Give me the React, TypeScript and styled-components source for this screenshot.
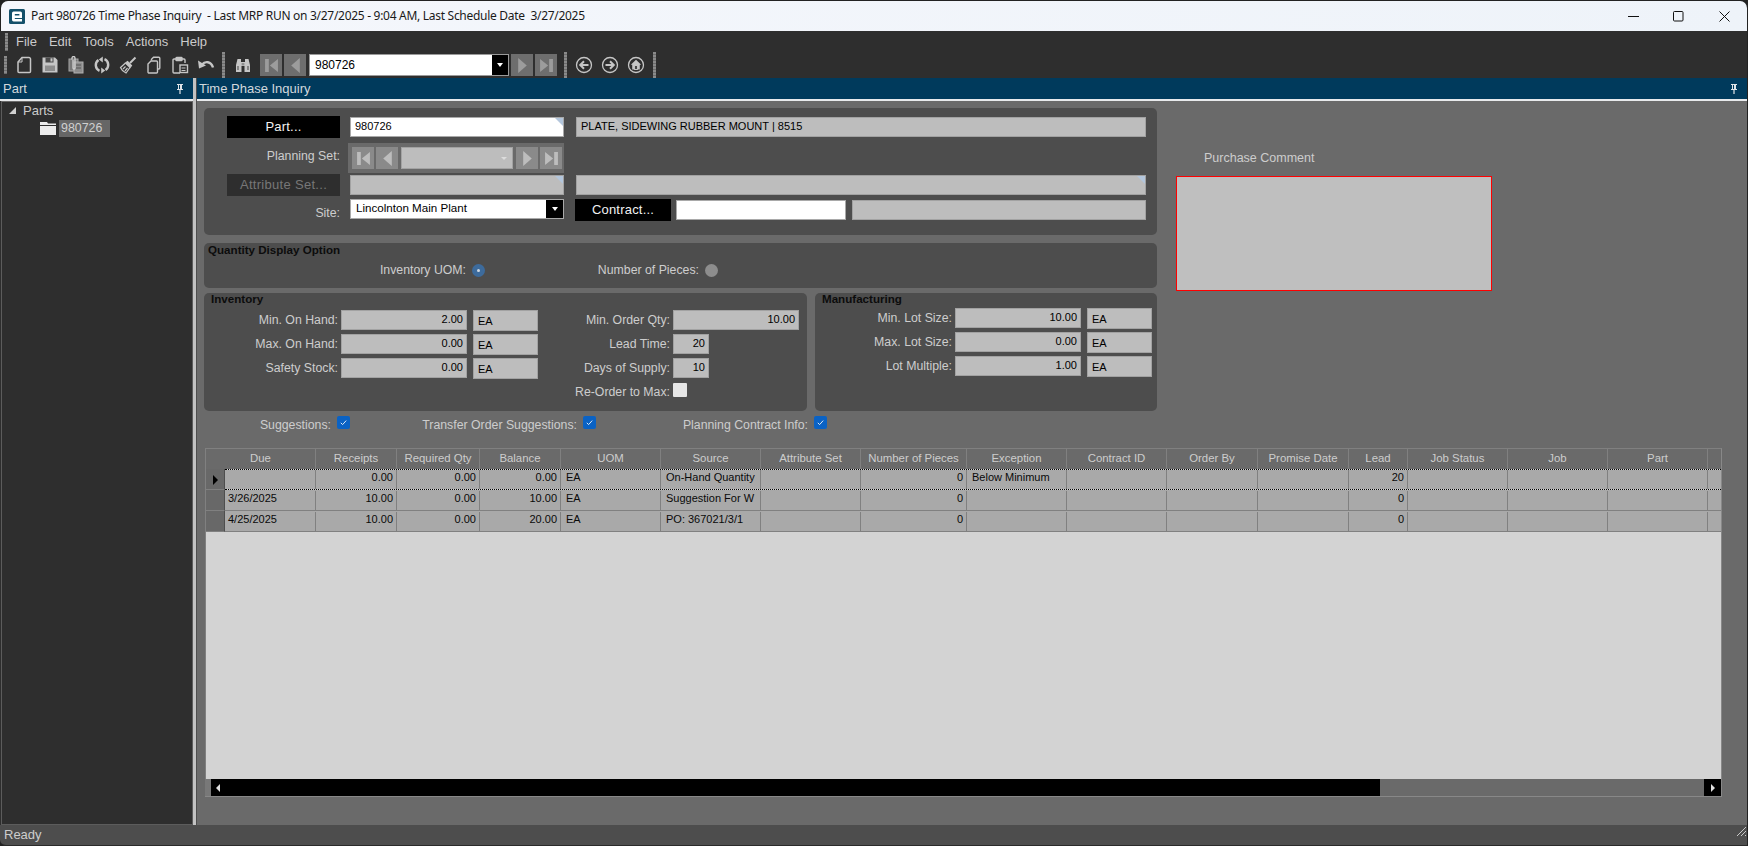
import React from "react";
import styled, { createGlobalStyle } from "styled-components";

const Global = createGlobalStyle`
  html, body { margin: 0; padding: 0; height: 100%; overflow: hidden; background: #222; }
  #root { width: 1748px; height: 846px; }
  * { box-sizing: border-box; }
`;

const Window = styled.div`
  width: 1748px; height: 846px; display: flex; flex-direction: column;
  font-family: "Liberation Sans", Arial, sans-serif; color: #cdcdcd; background: #222;
`;
const TitleBar = styled.header`
  height: 30px; margin: 1px 1px 0 1px; flex: none; display: flex; align-items: center;
  background: linear-gradient(90deg, #f5f7fc, #eef3f9); border-radius: 7px 7px 0 0; padding-left: 8px;
`;
const TitleText = styled.span`
  margin-left: 6px; font: 12px/16px "Noto Sans", "Open Sans", sans-serif; color: #1a1a1a; white-space: pre; flex: 1; letter-spacing: -0.29px;
`;
const WinButton = styled.span`
  width: 45.5px; height: 30px; display: flex; align-items: center; justify-content: center; color: #111;
`;
const MenuBar = styled.nav`
  height: 21px; flex: none; background: #2e2e2e; display: flex; align-items: center; padding-left: 5px; margin-right: 1px;
`;
const Grip = styled.i<{ $mr?: number }>`
  width: 3px; height: 18px; background: repeating-linear-gradient(180deg, #8a8a8a 0 2px, #6c6c6c 2px 3px); flex: none;
  margin-right: ${p => p.$mr ?? 0}px;
`;
const MenuItems = styled.div`
  display: flex; gap: 12px; margin-left: 8px; font-size: 13px; color: #cbcbcb;
`;
const ToolBar = styled.div`
  height: 26px; flex: none; background: #2e2e2e; display: flex; align-items: center; padding-left: 4px; margin-right: 1px;
`;
const Sep = styled.i<{ $ml?: number; $mr?: number }>`
  width: 3px; height: 26px; flex: none; background: repeating-linear-gradient(180deg, #8a8a8a 0 2px, #6c6c6c 2px 3px);
  margin-left: ${p => p.$ml ?? 0}px; margin-right: ${p => p.$mr ?? 0}px;
`;
const IconSlot = styled.span<{ $ml?: number }>`
  width: 26px; height: 26px; flex: none; display: flex; align-items: center; justify-content: center; color: #c6c6c6;
  margin-left: ${p => p.$ml ?? 0}px;
`;
const NavBtn = styled.span<{ $bg: string; $w: number; $h: number }>`
  width: ${p => p.$w}px; height: ${p => p.$h}px; background: ${p => p.$bg}; flex: none; display: flex; align-items: center; justify-content: center;
`;
const NavRow = styled.div<{ $gap: number; $ml?: number }>`
  display: flex; align-items: center; gap: ${p => p.$gap}px; margin-left: ${p => p.$ml ?? 0}px;
`;
const Combo = styled.div`
  width: 200px; height: 22px; flex: none; margin: 0 2px 0 3px; background: #fff; border: 1px solid #9a9a9a; display: flex; align-items: stretch;
  font-size: 12px; line-height: 20px; color: #000;
`;
const ComboText = styled.span`
  flex: 1; padding-left: 5px;
`;
const DropBlack = styled.span<{ $w: number }>`
  width: ${p => p.$w}px; background: #000; display: flex; align-items: center; justify-content: center; flex: none;
`;
const DownTri = styled.i`
  width: 0; height: 0; border-left: 3.5px solid transparent; border-right: 3.5px solid transparent; border-top: 4px solid #fff;
`;
const Main = styled.div`
  height: 747px; flex: none; display: flex; margin-right: 1px; background: #6a6a6a;
`;
const LeftPane = styled.aside`
  width: 193px; flex: none; display: flex; flex-direction: column; background: #2e2e2e;
`;
const PaneHead = styled.div<{ $pl: number }>`
  height: 23px; flex: none; background: #003a5c; border-bottom: 2px solid #e8eaec; display: flex; align-items: center;
  justify-content: space-between; font-size: 13px; line-height: 21px; color: #d2d8dc; padding: 0 9px 0 ${p => p.$pl}px;
`;
const Pin = styled.svg`
  width: 8px; height: 10px; flex: none;
`;
const TreeBox = styled.div`
  flex: 1; margin-left: 1px; border: 1px solid #5c5c5c; border-top-color: #6a6a6a; background: #2e2e2e; font-size: 13px; color: #cbcbcb;
`;
const TreeRoot = styled.div`
  height: 17px; display: flex; align-items: center; padding-left: 7px; gap: 7px; line-height: 17px;
`;
const TreeChild = styled.div`
  height: 17px; margin-top: 1px; display: flex; align-items: center; padding-left: 38px; gap: 3px;
`;
const TreeSel = styled.span`
  background: #666; height: 17px; width: 51px; padding-left: 2px; font-size: 12.4px; line-height: 17px; color: #d0d0d0;
`;
const Splitter = styled.div`
  width: 4px; flex: none; background: #c2c2c2; border-right: 1px solid #4d4d4d;
`;
const RightPane = styled.section`
  flex: 1; display: flex; flex-direction: column; min-width: 0;
`;
const TopSplit = styled.div`
  height: 347px; flex: none; display: flex; padding: 7px 0 0 7px;
`;
const Forms = styled.div`
  width: 953px; flex: none; display: flex; flex-direction: column;
`;
const Card = styled.div<{ $h: number; $mt?: number; $w?: number }>`
  background: #4d4d4d; border-radius: 5px; height: ${p => p.$h}px; margin-top: ${p => p.$mt ?? 0}px;
  ${p => (p.$w ? `width: ${p.$w}px; flex: none;` : "")}
`;
const HeadCard = styled(Card)`
  padding: 8px 0 0 23px;
`;
const HeadRow = styled.div<{ $h: number; $mt?: number }>`
  display: grid; grid-template-columns: 123px 226px 570px; height: ${p => p.$h}px; margin-top: ${p => p.$mt ?? 0}px; align-items: center;
`;
const BlackBtn = styled.div<{ $w: number; $off?: boolean }>`
  width: ${p => p.$w}px; height: 22px; flex: none; background: ${p => (p.$off ? "#2e2e2e" : "#000")}; color: ${p => (p.$off ? "#777" : "#f2f2f2")};
  font-size: 13px; line-height: 22px; text-align: center; letter-spacing: ${p => (p.$off ? "0.3px" : "0.2px")};
`;
const RightLabel = styled.div<{ $w?: number; $pr?: number; $mt?: number }>`
  ${p => (p.$w ? `width: ${p.$w}px;` : "")} text-align: right; font-size: 12.3px; line-height: 15px; color: #cdcdcd; white-space: nowrap;
  padding-right: ${p => p.$pr ?? 0}px; margin-top: ${p => p.$mt ?? 0}px;
`;
const Field = styled.div<{ $w?: number; $h?: number; $white?: boolean; $right?: boolean; $ml?: number }>`
  position: relative; width: ${p => (p.$w ? `${p.$w}px` : "100%")}; height: ${p => p.$h ?? 20}px; flex: none;
  background: ${p => (p.$white ? "#fff" : "#bdbdbd")}; border: 1px solid ${p => (p.$white ? "#a9a9a9" : "#a2a2a2")};
  font-size: 11px; line-height: 17px; color: #000; padding: 0 3px 0 4px; text-align: ${p => (p.$right ? "right" : "left")}; white-space: nowrap; overflow: hidden;
  margin-left: ${p => p.$ml ?? 0}px;
`;
const UomField = styled(Field)`
  line-height: 20px; padding-left: 4px;
`;
const Corner = styled.i`
  position: absolute; top: 0; right: 0; width: 0; height: 0; border-top: 8px solid #b3c6dc; border-left: 8px solid transparent;
`;
const PlanSet = styled.div`
  width: 216px; height: 30px; margin-left: -2px; background: #6a6a6a; display: flex; align-items: center; padding-left: 4px; gap: 2px;
`;
const PlanCombo = styled.div`
  width: 112px; height: 22px; margin: 0 1px; background: #bdbdbd; border: 1px solid #a2a2a2; flex: none; display: flex; align-items: center; justify-content: flex-end; padding-right: 5px;
`;
const GreyTri = styled.i`
  width: 0; height: 0; border-left: 3px solid transparent; border-right: 3px solid transparent; border-top: 3px solid #dcdcdc;
`;
const SiteSelect = styled.div`
  width: 214px; height: 20px; align-self: start; background: #fff; border: 1px solid #a9a9a9; display: flex; align-items: stretch; font-size: 11.6px; line-height: 16px; color: #000;
`;
const SiteText = styled.span`
  flex: 1; padding-left: 5px;
`;
const ContractCell = styled.div`
  display: flex; align-items: center; margin-left: -1px;
`;
const CardTitle = styled.div<{ $pl: number; $mb?: number; $pt?: number }>`
  font-size: 11.6px; font-weight: 700; line-height: 12px; color: #0c0c0c; padding-left: ${p => p.$pl}px; margin-bottom: ${p => p.$mb ?? 0}px; padding-top: ${p => p.$pt ?? 0}px;
`;
const QtyRow = styled.div`
  display: flex; align-items: center; height: 18px; margin-top: 5px;
`;
const Radio = styled.span<{ $on?: boolean; $ml: number }>`
  width: 13px; height: 13px; border-radius: 50%; flex: none; margin-left: ${p => p.$ml}px; background: ${p => (p.$on ? "#3d6b9c" : "#8d8d8d")};
  display: flex; align-items: center; justify-content: center;
  &::after { content: ""; width: 3px; height: 3px; border-radius: 50%; background: ${p => (p.$on ? "#cfd8e2" : "transparent")}; }
`;
const TwoCards = styled.div`
  display: flex; gap: 8px; margin-top: 5px;
`;
const FieldGrid = styled.div<{ $cols: string }>`
  display: grid; grid-template-columns: ${p => p.$cols}; grid-auto-rows: 24px; align-items: start;
`;
const CheckRow = styled.div`
  height: 37px; display: flex; padding-top: 5px;
`;
const CheckGroup = styled.div<{ $w: number }>`
  width: ${p => p.$w}px; flex: none; display: flex; justify-content: flex-end; gap: 6px;
`;
const CheckBox = styled.span<{ $on?: boolean }>`
  width: 13px; height: 13px; border-radius: 2px; flex: none; background: ${p => (p.$on ? "#0a62c4" : "#e6e6e6")}; display: flex; align-items: center; justify-content: center;
`;
const PlainCheck = styled(CheckBox)`
  width: 14px; height: 14px; margin-top: 1px; border-radius: 1px;
`;
const ReorderLabel = styled(RightLabel)`
  grid-column: 4;
`;
const Comment = styled.div`
  width: 317px; flex: none; margin-left: 19px; display: flex; flex-direction: column; padding-top: 42px;
`;
const CommentLabel = styled.div`
  font-size: 12.5px; line-height: 16px; color: #cdcdcd; padding-left: 28px; margin-bottom: 10px; padding-top: 1px; margin-top: -1px;
`;
const CommentBox = styled.div`
  width: 316px; height: 115px; background: #bfbfbf; border: 1px solid #ff0000;
`;
const GridWrap = styled.div`
  width: 1517px; height: 349px; margin-left: 8px; display: flex; flex-direction: column; background: #d3d3d3; border-right: 1px solid #888; border-top: 1px solid #808080; border-bottom: 1px solid #888;
`;
const GridHead = styled.div`
  display: flex; height: 20px; flex: none; background: #6a6a6a; border-left: 1px solid #808080;
`;
const HeadCell = styled.div<{ $w: number }>`
  width: ${p => p.$w}px; flex: none; border-right: 1px solid #808080; font-size: 11.4px; line-height: 19px; text-align: center; color: #cdcdcd; white-space: nowrap; overflow: hidden;
  &:last-child { border-right: 0; }
`;
const GridRow = styled.div`
  display: flex; height: 21px; flex: none;
`;
const Indicator = styled.div`
  width: 20px; flex: none; background: #686868; border-left: 1px solid #808080; border-bottom: 1px solid #808080; border-right: 1px solid #4e4e4e; display: flex; align-items: center; justify-content: center; padding-top: 1px;
`;
const RowCells = styled.div<{ $sel?: boolean }>`
  display: flex; flex: 1; min-width: 0; border-top: 1px ${p => (p.$sel ? "dotted #000" : "solid #a9a9a9")}; border-bottom: 1px ${p => (p.$sel ? "dotted #000" : "solid #808080")};
`;
const Cell = styled.div<{ $w: number; $right?: boolean; $pl: number }>`
  width: ${p => p.$w}px; flex: none; background: #a9a9a9; border-right: 1px solid #808080; font-size: 11px; line-height: 15px; color: #0a0a0a;
  text-align: ${p => (p.$right ? "right" : "left")}; padding: ${p => (p.$right ? "0 3px 0 0" : `0 1px 0 ${p.$pl}px`)}; white-space: nowrap; overflow: hidden;
  &:last-child { border-right: 0; }
`;
const GridSpace = styled.div`
  flex: 1; border-left: 1px solid #808080;
`;
const HScroll = styled.div`
  height: 17px; flex: none; display: flex; background: #6a6a6a;
`;
const ScrollLead = styled.span`
  width: 6px; background: #787878; flex: none;
`;
const ScrollThumb = styled.span`
  width: 1169px; background: #000; flex: none; display: flex; align-items: center; padding-left: 5px;
`;
const ScrollTrack = styled.span`
  flex: 1;
`;
const ScrollBtn = styled.span`
  width: 17px; background: #000; flex: none; display: flex; align-items: center; justify-content: center;
`;
const Arrow = styled.i<{ $dir: "l" | "r"; $c?: string; $s?: number }>`
  width: 0; height: 0; border-top: ${p => p.$s ?? 4}px solid transparent; border-bottom: ${p => p.$s ?? 4}px solid transparent;
  ${p => (p.$dir === "l" ? `border-right: ${p.$s ?? 4}px solid ${p.$c ?? "#e0e0e0"};` : `border-left: ${p.$s ?? 4}px solid ${p.$c ?? "#e0e0e0"};`)}
`;
const StatusBar = styled.footer`
  height: 21px; flex: none; background: #4d4d4d; border-bottom: 1px solid #2a2a2a; font-size: 13px; line-height: 20px; color: #cdcdcd; padding-left: 4px; display: flex; justify-content: space-between; margin-right: 1px; border-radius: 0 0 0 6px;
`;
const FlexIcon = styled.svg`
  flex: none;
`;
const FlipIcon = styled.svg`
  transform: scaleX(-1);
`;

const Logo = () => (
  <FlexIcon width="16" height="15" viewBox="0 0 16 15">
    <rect width="16" height="15" rx="1.5" fill="#14506a" />
    <path fillRule="evenodd" fill="#fff" d="M4.6 2.6h6.8a1.6 1.6 0 0 1 1.6 1.6v4.7H5.8v1.2H13v2.3H4.6A1.6 1.6 0 0 1 3 10.8V4.2a1.6 1.6 0 0 1 1.6-1.6zM5.8 5v1.6h4.6V5z" />
  </FlexIcon>
);
const PinIcon = () => (
  <Pin viewBox="0 0 8 10"><path d="M1 0h6v1H6v4h1v1H4.6v4H3.4V6H1V5h1V1H1zM3 1v4h1V1z" fill="#dfe4e8" fillRule="evenodd" /></Pin>
);

const S = { width: 18, height: 18, viewBox: "0 0 18 18" };
const FileIcon = () => (
  <svg {...S} fill="none" stroke="currentColor" strokeWidth="1.5"><path d="M7 1.5h7a1.5 1.5 0 0 1 1.5 1.5v12.5a1 1 0 0 1-1 1H4a1 1 0 0 1-1-1V6z" /><path d="M7 1.5v4.5H3" strokeWidth="1" /></svg>
);
const SaveIcon = () => (
  <svg {...S}><path d="M1.5 1.5h12.5l2.5 2.5v12.5h-15z" fill="currentColor" /><rect x="4.5" y="1.5" width="8" height="5" fill="#4a4a4a" /><rect x="9.5" y="2.3" width="2" height="3.2" fill="#c6c6c6" /><rect x="4" y="9.5" width="10" height="5.5" fill="#8d8d8d" /></svg>
);
const DeleteIcon = () => (
  <svg {...S}><rect x="2" y="3" width="9" height="12" fill="#777" stroke="#a8a8a8" /><rect x="7" y="6" width="9" height="11" fill="#8d8d8d" stroke="#b0b0b0" /><path d="M5 3.5V2a1.5 1.5 0 0 1 3 0v10a1 1 0 0 1-2 0V4" fill="none" stroke="#d0d0d0" strokeWidth="1.3" /><path d="M9 9h5M9 12h5" stroke="#555" /></svg>
);
const RefreshIcon = () => (
  <svg {...S} fill="none" stroke="currentColor" strokeWidth="2.4"><path d="M6.5 14.8A6.2 6.2 0 0 1 5.5 4" /><path d="M11.5 3.2a6.2 6.2 0 0 1 1 10.8" /><path d="M9.8 0.6v6l-4-3zM8.2 17.4v-6l4 3z" fill="currentColor" stroke="none" /></svg>
);
const BroomIcon = () => (
  <svg {...S} fill="none" stroke="currentColor" strokeWidth="1.2"><path d="M11 7l5.5-5.5" strokeWidth="2" /><path d="M8.5 5.5l4 4-1.5 2L6.5 7z" fill="currentColor" /><path d="M6.5 7L1.5 11.5c1 2.5 3 4.5 5.5 5.5l4-5.5" /><path d="M4 13l2.5-2.5M6 15l2.5-3" /></svg>
);
const CopyIcon = () => (
  <svg {...S} fill="none" stroke="currentColor" strokeWidth="1.4"><path d="M6.5 4.5V3.2l2-2h5.3a1 1 0 0 1 1 1V12a1 1 0 0 1-1 1h-1.3" /><path d="M6 5h5.5a1 1 0 0 1 1 1v10a1 1 0 0 1-1 1H4a1 1 0 0 1-1-1V8z" fill="#2e2e2e" /></svg>
);
const PasteIcon = () => (
  <svg {...S} fill="none" stroke="currentColor" strokeWidth="1.4"><path d="M5 3H3a1 1 0 0 0-1 1v12a1 1 0 0 0 1 1h6" /><path d="M11 3h2a1 1 0 0 1 1 1v3" /><rect x="5" y="1.5" width="6" height="3" rx=".6" fill="currentColor" /><rect x="9" y="9" width="7.5" height="7.5" fill="#2e2e2e" /><path d="M10.5 12h4M10.5 14.5h4" strokeWidth="1" /></svg>
);
const UndoIcon = () => (
  <svg {...S} fill="none" stroke="currentColor" strokeWidth="2.4"><path d="M5 8.5c3-3.5 9-3.5 11 3" /><path d="M1 4.5l1 8 7-3z" fill="currentColor" stroke="none" /></svg>
);
const BinocularsIcon = () => (
  <svg {...S}><path d="M3.5 3h3.5v3h4V3h3.5l1.5 6v7h-5.5V10H7.5v6H2V9z" fill="currentColor" /><rect x="7.6" y="7" width="2.8" height="2.5" fill="#8f8f8f" /><path d="M4 10v4M14 10v4" stroke="#6a6a6a" strokeWidth="1.4" /></svg>
);
const backParts = (
  <>
    <circle cx="9" cy="9" r="7.5" strokeWidth="1.3" /><path d="M13.5 9H6M9 5.2L5.2 9 9 12.8" strokeWidth="2" />
  </>
);
const CircleBack = () => <svg {...S} fill="none" stroke="currentColor">{backParts}</svg>;
const CircleForward = () => <FlipIcon {...S} fill="none" stroke="currentColor">{backParts}</FlipIcon>;
const HomeIcon = () => (
  <svg {...S} fill="none" stroke="currentColor"><circle cx="9" cy="9" r="7.5" strokeWidth="1.3" /><path d="M9 3.8L3.8 8.8H5.2V13.5H12.8V8.8H14.2z" fill="currentColor" stroke="none" /><rect x="7.6" y="9.5" width="2.8" height="4" fill="#3a3a3a" /></svg>
);

type NavKind = "first" | "prev" | "next" | "last";
const NavGlyph = ({ kind, c, w = 14 }: { kind: NavKind; c: string; w?: number }) => {
  const d = {
    first: "M1 1h3.5v12H1zM13 1v12L5.5 7z",
    prev: "M11 0v14L3 7z",
    next: "M3 0v14l8-7z",
    last: "M1 1v12l7.5-6zM9.5 1H13v12H9.5z",
  }[kind];
  return <svg width={w} height={w} viewBox="0 0 14 14"><path d={d} fill={c} /></svg>;
};
const ToolNav = ({ kind }: { kind: NavKind }) => (
  <NavBtn $bg="#6e6e6e" $w={22} $h={22}><NavGlyph kind={kind} c="#9c9c9c" w={15} /></NavBtn>
);
const PlanNav = ({ kind }: { kind: NavKind }) => (
  <NavBtn $bg="#8a8a8a" $w={22} $h={22}><NavGlyph kind={kind} c="#bdbdbd" w={15} /></NavBtn>
);
const TinyCheck = () => (
  <svg width="9" height="9" viewBox="0 0 9 9"><path d="M1.8 4.8L3.6 6.6 7.2 2.6" fill="none" stroke="#dbe8f7" strokeWidth="1" /></svg>
);

const cols: [string, number][] = [
  ["Due", 111], ["Receipts", 81], ["Required Qty", 83], ["Balance", 81], ["UOM", 100], ["Source", 100],
  ["Attribute Set", 100], ["Number of Pieces", 106], ["Exception", 100], ["Contract ID", 100], ["Order By", 91],
  ["Promise Date", 91], ["Lead", 59], ["Job Status", 100], ["Job", 100], ["Part", 100], ["", 13],
];
const rightCols = new Set([1, 2, 3, 7, 12]);
const rows = [
  ["", "0.00", "0.00", "0.00", "EA", "On-Hand Quantity", "", "0", "Below Minimum", "", "", "", "20", "", "", "", ""],
  ["3/26/2025", "10.00", "0.00", "10.00", "EA", "Suggestion For W", "", "0", "", "", "", "", "0", "", "", "", ""],
  ["4/25/2025", "10.00", "0.00", "20.00", "EA", "PO: 367021/3/1", "", "0", "", "", "", "", "0", "", "", "", ""],
];

const inv = [
  ["Min. On Hand:", "2.00", "Min. Order Qty:", "10.00", 126],
  ["Max. On Hand:", "0.00", "Lead Time:", "20", 36],
  ["Safety Stock:", "0.00", "Days of Supply:", "10", 36],
] as const;
const mfg = [["Min. Lot Size:", "10.00"], ["Max. Lot Size:", "0.00"], ["Lot Multiple:", "1.00"]];

export default function App() {
  return (
    <Window>
      <Global />
      <TitleBar>
        <Logo />
        <TitleText>Part 980726 Time Phase Inquiry  - Last MRP RUN on 3/27/2025 - 9:04 AM, Last Schedule Date  3/27/2025</TitleText>
        <WinButton><svg width="11" height="11" viewBox="0 0 11 11"><path d="M0 5.5h11" stroke="currentColor" /></svg></WinButton>
        <WinButton><svg width="11" height="11" viewBox="0 0 11 11"><rect x=".5" y=".5" width="9.5" height="9.5" rx="1" fill="none" stroke="currentColor" /></svg></WinButton>
        <WinButton><svg width="11" height="11" viewBox="0 0 11 11"><path d="M.5.5l10 10M10.5.5l-10 10" stroke="currentColor" /></svg></WinButton>
      </TitleBar>
      <MenuBar>
        <Grip />
        <MenuItems><span>File</span><span>Edit</span><span>Tools</span><span>Actions</span><span>Help</span></MenuItems>
      </MenuBar>
      <ToolBar>
        <Grip $mr={4} />
        <IconSlot><FileIcon /></IconSlot>
        <IconSlot><SaveIcon /></IconSlot>
        <IconSlot><DeleteIcon /></IconSlot>
        <IconSlot><RefreshIcon /></IconSlot>
        <IconSlot><BroomIcon /></IconSlot>
        <IconSlot><CopyIcon /></IconSlot>
        <IconSlot><PasteIcon /></IconSlot>
        <IconSlot><UndoIcon /></IconSlot>
        <Sep $ml={3} />
        <IconSlot $ml={5}><BinocularsIcon /></IconSlot>
        <NavRow $gap={2} $ml={4}><ToolNav kind="first" /><ToolNav kind="prev" /></NavRow>
        <Combo><ComboText>980726</ComboText><DropBlack $w={16}><DownTri /></DropBlack></Combo>
        <NavRow $gap={2}><ToolNav kind="next" /><ToolNav kind="last" /></NavRow>
        <Sep $ml={7} />
        <IconSlot $ml={4}><CircleBack /></IconSlot>
        <IconSlot><CircleForward /></IconSlot>
        <IconSlot><HomeIcon /></IconSlot>
        <Sep $ml={4} />
      </ToolBar>
      <Main>
        <LeftPane>
          <PaneHead $pl={3}><span>Part</span><PinIcon /></PaneHead>
          <TreeBox>
            <TreeRoot>
              <FlexIcon width="7" height="7" viewBox="0 0 7 7"><path d="M7 0v7H0z" fill="#d0d0d0" /></FlexIcon>
              <span>Parts</span>
            </TreeRoot>
            <TreeChild>
              <FlexIcon width="16" height="13" viewBox="0 0 16 13"><path d="M0 0h7l1 1.5h8V3H0zM0 4h16v9H0z" fill="#ececec" /></FlexIcon>
              <TreeSel>980726</TreeSel>
            </TreeChild>
          </TreeBox>
        </LeftPane>
        <Splitter />
        <RightPane>
          <PaneHead $pl={2}><span>Time Phase Inquiry</span><PinIcon /></PaneHead>
          <TopSplit>
            <Forms>
              <HeadCard $h={127}>
                <HeadRow $h={22}>
                  <BlackBtn $w={113}>Part...</BlackBtn>
                  <Field $w={214} $white><span>980726</span><Corner /></Field>
                  <Field>PLATE, SIDEWING RUBBER MOUNT | 8515</Field>
                </HeadRow>
                <HeadRow $h={30} $mt={5}>
                  <RightLabel $w={113} $mt={-4}>Planning Set:</RightLabel>
                  <PlanSet>
                    <PlanNav kind="first" /><PlanNav kind="prev" />
                    <PlanCombo><GreyTri /></PlanCombo>
                    <PlanNav kind="next" /><PlanNav kind="last" />
                  </PlanSet>
                  <span />
                </HeadRow>
                <HeadRow $h={22} $mt={1}>
                  <BlackBtn $w={113} $off>Attribute Set...</BlackBtn>
                  <Field $w={214}><Corner /></Field>
                  <Field><Corner /></Field>
                </HeadRow>
                <HeadRow $h={22} $mt={3}>
                  <RightLabel $w={113} $mt={6}>Site:</RightLabel>
                  <SiteSelect><SiteText>Lincolnton Main Plant</SiteText><DropBlack $w={17}><DownTri /></DropBlack></SiteSelect>
                  <ContractCell>
                    <BlackBtn $w={96}>Contract...</BlackBtn>
                    <Field $w={170} $white $ml={5} />
                    <Field $w={294} $ml={6} />
                  </ContractCell>
                </HeadRow>
              </HeadCard>
              <Card $h={45} $mt={8}>
                <CardTitle $pl={4} $pt={1}>Quantity Display Option</CardTitle>
                <QtyRow>
                  <RightLabel $w={262}>Inventory UOM:</RightLabel>
                  <Radio $on $ml={6} />
                  <RightLabel $w={214}>Number of Pieces:</RightLabel>
                  <Radio $ml={6} />
                </QtyRow>
              </Card>
              <TwoCards>
                <Card $h={118} $w={603}>
                  <CardTitle $pl={7} $mb={5}>Inventory</CardTitle>
                  <FieldGrid $cols="137px 132px 65px 135px 126px">
                    {inv.map(r => (
                      <React.Fragment key={r[0]}>
                        <RightLabel $pr={3} $mt={3}>{r[0]}</RightLabel>
                        <Field $w={126} $right>{r[1]}</Field>
                        <UomField $w={65} $h={21}>EA</UomField>
                        <RightLabel $pr={3} $mt={3}>{r[2]}</RightLabel>
                        <Field $w={r[4]} $right>{r[3]}</Field>
                      </React.Fragment>
                    ))}
                    <ReorderLabel $pr={3} $mt={3}>Re-Order to Max:</ReorderLabel>
                    <PlainCheck />
                  </FieldGrid>
                </Card>
                <Card $h={118} $w={342}>
                  <CardTitle $pl={7} $mb={3}>Manufacturing</CardTitle>
                  <FieldGrid $cols="140px 132px 65px">
                    {mfg.map(r => (
                      <React.Fragment key={r[0]}>
                        <RightLabel $pr={3} $mt={3}>{r[0]}</RightLabel>
                        <Field $w={126} $right>{r[1]}</Field>
                        <UomField $w={65} $h={21}>EA</UomField>
                      </React.Fragment>
                    ))}
                  </FieldGrid>
                </Card>
              </TwoCards>
              <CheckRow>
                <CheckGroup $w={146}><RightLabel $mt={2}>Suggestions:</RightLabel><CheckBox $on><TinyCheck /></CheckBox></CheckGroup>
                <CheckGroup $w={246}><RightLabel $mt={2}>Transfer Order Suggestions:</RightLabel><CheckBox $on><TinyCheck /></CheckBox></CheckGroup>
                <CheckGroup $w={231}><RightLabel $mt={2}>Planning Contract Info:</RightLabel><CheckBox $on><TinyCheck /></CheckBox></CheckGroup>
              </CheckRow>
            </Forms>
            <Comment>
              <CommentLabel>Purchase Comment</CommentLabel>
              <CommentBox />
            </Comment>
          </TopSplit>
          <GridWrap>
            <GridHead>
              {cols.map(([n, w], i) => <HeadCell key={i} $w={i === 0 ? w - 1 : w}>{n}</HeadCell>)}
            </GridHead>
            {rows.map((r, ri) => (
              <GridRow key={ri}>
                <Indicator>{ri === 0 && <Arrow $dir="r" $c="#000" $s={5} />}</Indicator>
                <RowCells $sel={ri === 0}>
                  {r.map((v, i) => (
                    <Cell key={i} $w={i === 0 ? 91 : cols[i][1]} $right={rightCols.has(i)} $pl={i === 0 ? 3 : 5}>{v}</Cell>
                  ))}
                </RowCells>
              </GridRow>
            ))}
            <GridSpace />
            <HScroll>
              <ScrollLead />
              <ScrollThumb><Arrow $dir="l" /></ScrollThumb>
              <ScrollTrack />
              <ScrollBtn><Arrow $dir="r" /></ScrollBtn>
            </HScroll>
          </GridWrap>
        </RightPane>
      </Main>
      <StatusBar>
        <span>Ready</span>
        <svg width="12" height="12" viewBox="0 0 12 12"><path d="M11 2L2 11M11 6l-5 5M11 10l-1 1" stroke="#c8c8c8" /></svg>
      </StatusBar>
    </Window>
  );
}
